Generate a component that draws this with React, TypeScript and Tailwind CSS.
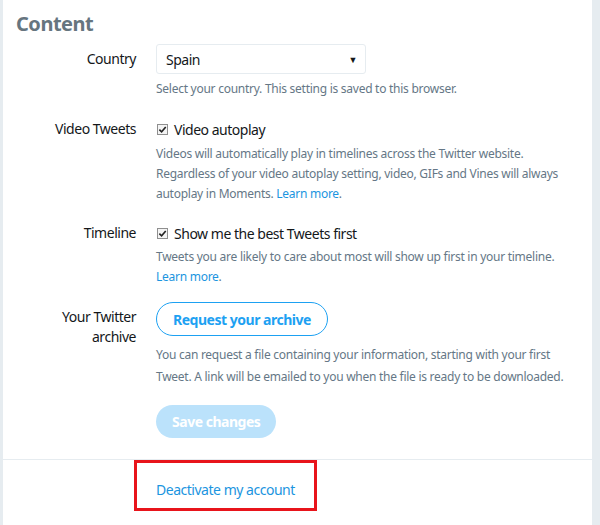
export default function App() {
  return (
    <div className="flex w-[600px] h-[525px] bg-[#e6ecf0] font-['Noto_Sans',sans-serif] tracking-[-0.03em] overflow-hidden">
      <div className="w-[3px] shrink-0" />
      <main className="flex-1 bg-white flex flex-col">
        <h2 className="pl-[13px] pt-[12px] text-[20px] leading-[24px] font-bold text-[#66757f]">Content</h2>

        <div>
          {/* Country */}
          <div className="flex gap-[20px] mt-[8px]">
            <div className="w-[133px] shrink-0 text-right text-[14px] leading-[30px] text-[#14171a]">Country</div>
            <div className="flex-1">
              <div className="w-[210px] h-[30px] border border-[#e6ecf0] rounded-[3px] flex items-center justify-between pl-[9px] pr-[8px] text-[14px] text-[#14171a]">
                <span>Spain</span>
                <span className="text-[9px] leading-none">▼</span>
              </div>
              <p className="mt-[5px] text-[12px] leading-[20px] tracking-[-0.022em] text-[#657786]">
                Select your country. This setting is saved to this browser.
              </p>
            </div>
          </div>

          {/* Video Tweets */}
          <div className="flex gap-[20px] mt-[20px]">
            <div className="w-[133px] shrink-0 text-right text-[14px] leading-[20px] text-[#14171a]">Video Tweets</div>
            <div className="flex-1">
              <Check label="Video autoplay" />
              <p className="mt-[5px] text-[12px] leading-[20px] tracking-[-0.022em] text-[#657786] whitespace-nowrap">
                Videos will automatically play in timelines across the Twitter website.
                <br />
                Regardless of your video autoplay setting, video, GIFs and Vines will always
                <br />
                autoplay in Moments. <a className="text-[#1b95e0]">Learn more</a>.
              </p>
            </div>
          </div>

          {/* Timeline */}
          <div className="flex gap-[20px] mt-[19px]">
            <div className="w-[133px] shrink-0 text-right text-[14px] leading-[20px] text-[#14171a]">Timeline</div>
            <div className="flex-1">
              <Check label="Show me the best Tweets first" />
              <p className="mt-[4px] text-[12px] leading-[20px] tracking-[-0.022em] text-[#657786] whitespace-nowrap">
                Tweets you are likely to care about most will show up first in your timeline.
                <br />
                <a className="text-[#1b95e0]">Learn more</a>.
              </p>
            </div>
          </div>

          {/* Archive */}
          <div className="flex gap-[20px] mt-[15px]">
            <div className="w-[133px] shrink-0 pt-[5px] text-right text-[14px] leading-[20px] text-[#14171a]">
              Your Twitter
              <br />
              archive
            </div>
            <div className="flex-1">
              <button className="h-[34px] px-[16px] rounded-full border border-[#1da1f2] text-[#1da1f2] text-[14px] font-bold">
                Request your archive
              </button>
              <p className="mt-[8px] text-[12px] leading-[22px] tracking-[-0.022em] text-[#657786] whitespace-nowrap">
                You can request a file containing your information, starting with your first
                <br />
                Tweet. A link will be emailed to you when the file is ready to be downloaded.
              </p>
              <button className="mt-[17px] h-[33px] px-[16px] rounded-full bg-[#bbe2fb] text-white text-[14px] font-bold">
                Save changes
              </button>
            </div>
          </div>
        </div>

        <div className="mt-[21px] border-t border-[#e6ecf0]" />

        <div className="pl-[131px]">
          <div className="w-[183px] h-[51px] border-[3px] border-[#e8141b] flex items-center pl-[19px] pt-[8px]">
            <a className="text-[14px] text-[#1b95e0]">Deactivate my account</a>
          </div>
        </div>
      </main>
      <div className="w-[8px] shrink-0" />
    </div>
  );
}

function Check({ label }: { label: string }) {
  return (
    <div className="flex items-center gap-[6px] h-[20px] text-[14px] text-[#14171a]">
      <span className="ml-[1px] w-[11px] h-[11px] border border-[#8f8f8f] bg-[#f4f4f4] flex items-center justify-center">
        <svg viewBox="0 0 10 10" className="w-[9px] h-[9px]">
          <path d="M1.5 5.2 L4 7.6 L8.6 2.2" fill="none" stroke="#222" strokeWidth="1.8" />
        </svg>
      </span>
      <span>{label}</span>
    </div>
  );
}
